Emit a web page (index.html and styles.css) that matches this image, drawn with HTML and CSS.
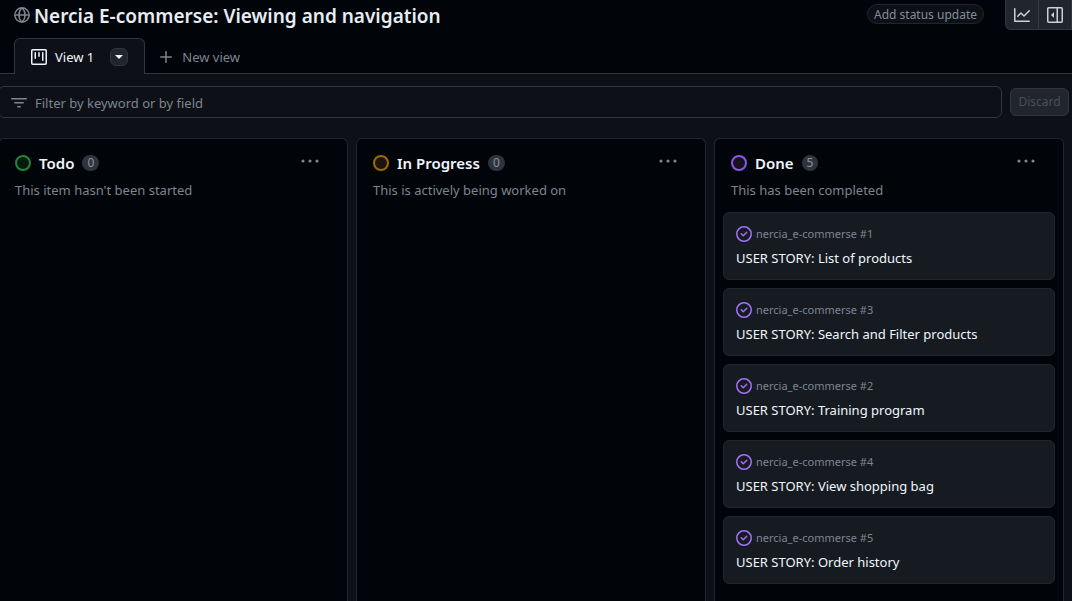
FILE: index.html
```html
<!DOCTYPE html>
<html lang="en">
<head>
<meta charset="utf-8">
<meta name="viewport" content="width=device-width, initial-scale=1">
<title>Nercia E-commerse: Viewing and navigation</title>
<link rel="stylesheet" href="styles.css">
</head>
<body>
<svg width="0" height="0" class="sprite" aria-hidden="true">
  <symbol id="dots" viewBox="0 0 18 4"><circle cx="2" cy="2" r="1.6"/><circle cx="9" cy="2" r="1.6"/><circle cx="16" cy="2" r="1.6"/></symbol>
  <symbol id="closed" viewBox="0 0 16 16"><path d="M11.28 6.78a.75.75 0 0 0-1.06-1.06L7.25 8.69 5.78 7.22a.75.75 0 0 0-1.06 1.06l2 2a.75.75 0 0 0 1.06 0l3.5-3.5ZM16 8A8 8 0 1 1 0 8a8 8 0 0 1 16 0Zm-1.5 0a6.5 6.5 0 1 0-13 0 6.5 6.5 0 0 0 13 0Z"/></symbol>
</svg>
<header class="header">
  <div class="title-bar">
    <svg class="globe" width="16" height="16" viewBox="0 0 16 16" aria-hidden="true"><path fill="none" stroke="currentColor" stroke-width="1.5" d="M8 .8a7.2 7.2 0 1 0 0 14.4A7.2 7.2 0 0 0 8 .8ZM.8 8h14.4M8 .8C3.9 4.6 3.9 11.400 8 15.200M8 .8c4.100 3.800 4.100 10.600 0 14.400"/></svg>
    <h1 class="title">Nercia E-commerse: Viewing and navigation</h1>
    <button class="status" type="button">Add status update</button>
    <div class="button-group">
      <button class="icon-button" type="button" aria-label="Insights"><svg width="16" height="16" viewBox="0 0 16 16"><path d="M1.500 1.750V13.500h13.750a.75.75 0 0 1 0 1.500H.75a.75.75 0 0 1-.75-.75V1.750a.75.75 0 0 1 1.500 0Zm14.280 2.530-5.250 5.250a.75.75 0 0 1-1.060 0L7 7.060 4.280 9.780a.751.751 0 0 1-1.042-.018.751.751 0 0 1-.018-1.042l3.250-3.250a.75.75 0 0 1 1.060 0L10 7.940l4.720-4.720a.751.751 0 0 1 1.042.018.751.751 0 0 1 .018 1.042Z"/></svg></button>
      <button class="icon-button" type="button" aria-label="Project details"><svg width="16" height="16" viewBox="0 0 16 16"><path d="m4.177 7.823 2.396-2.396A.25.25 0 0 1 7 5.604v4.792a.25.25 0 0 1-.427.177L4.177 8.177a.25.25 0 0 1 0-.354Z"/><path d="M0 1.750C0 .784.784 0 1.750 0h12.500C15.216 0 16 .784 16 1.750v12.500A1.750 1.750 0 0 1 14.250 16H1.750A1.750 1.750 0 0 1 0 14.250Zm1.750-.25a.25.25 0 0 0-.25.25v12.500c0 .138.112.25.25.25H9.500v-13Zm12.500 13a.25.25 0 0 0 .25-.25V1.750a.25.25 0 0 0-.25-.25H11v13Z"/></svg></button>
    </div>
  </div>
  <nav class="tabs" aria-label="Views">
    <div class="tab">
      <svg width="16" height="16" viewBox="0 0 16 16" aria-hidden="true"><path d="M1.750 0h12.500C15.216 0 16 .784 16 1.750v12.500A1.750 1.750 0 0 1 14.250 16H1.750A1.750 1.750 0 0 1 0 14.250V1.750C0 .784.784 0 1.750 0ZM1.500 1.750v12.500c0 .138.112.25.25.25h12.500a.25.25 0 0 0 .25-.25V1.750a.25.25 0 0 0-.25-.25H1.750a.25.25 0 0 0-.25.25ZM11.750 3a.75.75 0 0 1 .75.75v7.500a.75.75 0 0 1-1.500 0v-7.500a.75.75 0 0 1 .75-.75Zm-8.250.75a.75.75 0 0 1 1.500 0v5.500a.75.75 0 0 1-1.500 0ZM8 3a.75.75 0 0 1 .75.75v3.500a.75.75 0 0 1-1.500 0v-3.500A.75.75 0 0 1 8 3Z"/></svg>
      <a class="tab-label" href="#board">View 1</a>
      <button class="tab-menu" type="button" aria-label="View options"><svg width="8" height="4" viewBox="0 0 8 4"><path d="M0 0h8L4 4Z"/></svg></button>
    </div>
    <button class="new-view" type="button"><svg width="12" height="12" viewBox="0 0 12 12" aria-hidden="true"><path fill="none" stroke="currentColor" stroke-width="1.500" stroke-linecap="round" d="M6 .7v10.600M.7 6h10.600"/></svg>New view</button>
  </nav>
</header>
<main class="main">
  <form class="filter-row">
    <label class="filter">
      <svg width="16" height="16" viewBox="0 0 16 16" aria-hidden="true"><path d="M.75 3h14.500a.75.75 0 0 1 0 1.500H.75a.75.75 0 0 1 0-1.500ZM3 7.750A.75.75 0 0 1 3.750 7h8.500a.75.75 0 0 1 0 1.500h-8.500A.75.75 0 0 1 3 7.750Zm3 4a.75.75 0 0 1 .75-.75h2.500a.75.75 0 0 1 0 1.500h-2.500a.75.75 0 0 1-.75-.75Z"/></svg>
      <input class="filter-input" type="text" placeholder="Filter by keyword or by field" aria-label="Filter by keyword or by field">
    </label>
    <button class="discard" type="button" disabled>Discard</button>
  </form>
  <div class="board" id="board">
    <section class="column">
      <div class="column-head"><span class="dot todo"></span><h2 class="column-title">Todo</h2><span class="count">0</span><button class="more" type="button" aria-label="Todo options"><svg width="18" height="4"><use href="#dots"/></svg></button></div>
      <p class="description">This item hasn't been started</p>
    </section>
    <section class="column">
      <div class="column-head"><span class="dot progress"></span><h2 class="column-title">In Progress</h2><span class="count">0</span><button class="more" type="button" aria-label="In Progress options"><svg width="18" height="4"><use href="#dots"/></svg></button></div>
      <p class="description">This is actively being worked on</p>
    </section>
    <section class="column">
      <div class="column-head"><span class="dot done"></span><h2 class="column-title">Done</h2><span class="count">5</span><button class="more" type="button" aria-label="Done options"><svg width="18" height="4"><use href="#dots"/></svg></button></div>
      <p class="description">This has been completed</p>
      <div class="cards">
        <article class="card"><div class="card-ref"><svg class="closed" width="16" height="16"><use href="#closed"/></svg>nercia_e-commerse #1</div><a class="card-title" href="#1">USER STORY: List of products</a></article>
        <article class="card"><div class="card-ref"><svg class="closed" width="16" height="16"><use href="#closed"/></svg>nercia_e-commerse #3</div><a class="card-title" href="#3">USER STORY: Search and Filter products</a></article>
        <article class="card"><div class="card-ref"><svg class="closed" width="16" height="16"><use href="#closed"/></svg>nercia_e-commerse #2</div><a class="card-title" href="#2">USER STORY: Training program</a></article>
        <article class="card"><div class="card-ref"><svg class="closed" width="16" height="16"><use href="#closed"/></svg>nercia_e-commerse #4</div><a class="card-title" href="#4">USER STORY: View shopping bag</a></article>
        <article class="card"><div class="card-ref"><svg class="closed" width="16" height="16"><use href="#closed"/></svg>nercia_e-commerse #5</div><a class="card-title" href="#5">USER STORY: Order history</a></article>
      </div>
    </section>
  </div>
</main>
</body>
</html>
```
FILE: styles.css
```css
* { box-sizing: border-box; }
body {
  margin: 0;
  min-height: 100vh;
  display: flex;
  flex-direction: column;
  overflow-x: hidden;
  background: #0d1117;
  color: #f0f6fc;
  font: 13px/20px "Segoe UI", "Noto Sans", sans-serif;
}
.sprite { position: absolute; }
svg { fill: currentColor; flex: none; display: block; }
button { font: inherit; color: inherit; padding: 0; border: 0; background: none; }
a { color: inherit; text-decoration: none; }
h1, h2, p { margin: 0; }

.header { background: #010409; border-bottom: 1px solid #30363d; }
.title-bar { display: flex; align-items: flex-start; height: 38px; padding-left: 14px; }
.globe { margin-top: 7px; color: #7d8590; }
.title { margin: 0 auto 0 4px; color: #e6edf3; font-size: 19px; font-weight: 600; line-height: 32px; white-space: nowrap; }
.status {
  height: 20px;
  margin: 4px 21px 0 0;
  padding: 0 6px;
  border: 1px solid #21262d;
  border-radius: 10px;
  background: #0d1117;
  color: #848d97;
  font-size: 12px;
  line-height: 20px;
  white-space: nowrap;
}
.button-group {
  display: flex;
  height: 30px;
  border: 1px solid #30363d;
  border-top: 0;
  border-radius: 0 0 0 6px;
  background: #21262d;
  color: #c9d1d9;
}
.icon-button { width: 32px; display: grid; place-items: center; }
.icon-button + .icon-button { width: 33px; border-left: 1px solid #363b42; }

.tabs { display: flex; padding-left: 14px; height: 35px; }
.tab {
  display: flex;
  align-items: center;
  height: 36px;
  padding: 0 16px;
  border: 1px solid #30363d;
  border-bottom: 0;
  border-radius: 6px 6px 0 0;
  background: #0d1117;
}
.tab-label { margin: 0 16px 0 8px; }
.tab-menu {
  display: grid;
  place-items: center;
  width: 18px;
  height: 18px;
  border: 1px solid #30363d;
  border-radius: 6px;
  background: #21262d;
}
.new-view { display: flex; align-items: center; gap: 10px; height: 37px; margin-left: 15px; color: #7d8590; }

.main { flex: 1; display: flex; flex-direction: column; padding: 12px 8px 0 0; }
.filter-row { display: flex; align-items: center; gap: 8px; margin: 0 -5px 20px -2px; }
.filter {
  flex: 1;
  display: flex;
  align-items: center;
  gap: 8px;
  height: 32px;
  padding: 2px 12px 0;
  border: 1px solid #30363d;
  border-radius: 6px;
  color: #7d8590;
}
.filter-input { flex: 1; min-width: 0; padding: 0; border: 0; outline: 0; background: none; color: #e6edf3; font: inherit; }
.filter-input::placeholder { color: #7d8590; opacity: 1; }
.discard {
  width: 59px;
  height: 28px;
  border: 1px solid #30363d;
  border-radius: 6px;
  background: #21262d;
  color: #484f58;
  font-size: 12px;
}

.board { flex: 1; display: flex; gap: 8px; margin-left: -2px; }
.column {
  flex: 1;
  min-width: 0;
  padding: 14px 8px 8px;
  border: 1px solid #21262d;
  border-bottom: 0;
  border-radius: 6px 6px 0 0;
  background: #010409;
}
.column-head { display: flex; align-items: center; gap: 8px; height: 20px; padding: 0 20px 0 8px; }
.dot { width: 16px; height: 16px; border: 2px solid; border-radius: 50%; }
.todo { border-color: #238636; background: #07190f; }
.progress { border-color: #9e6a03; background: #1a1409; }
.done { border-color: #8957e5; background: #15111f; }
.column-title { font-size: 15px; font-weight: 600; line-height: 20px; }
.count {
  min-width: 16px;
  height: 16px;
  padding: 0 5px;
  border-radius: 8px;
  background: #2f343c;
  color: #8b939e;
  font-size: 12px;
  line-height: 16px;
}
.more { align-self: flex-start; height: 16px; margin-left: auto; color: #7d8590; }
.description { margin: 7px 8px 12px; color: #7d8590; }
.cards { display: grid; gap: 8px; }
.card { height: 68px; padding: 11px 12px; border: 1px solid #21262d; border-radius: 6px; background: #161b22; }
.card-ref { display: flex; align-items: center; gap: 4px; height: 20px; color: #7d8590; font-size: 11px; }
.closed { color: #a371f7; }
.card-title { display: block; margin-top: 4px; }
```
